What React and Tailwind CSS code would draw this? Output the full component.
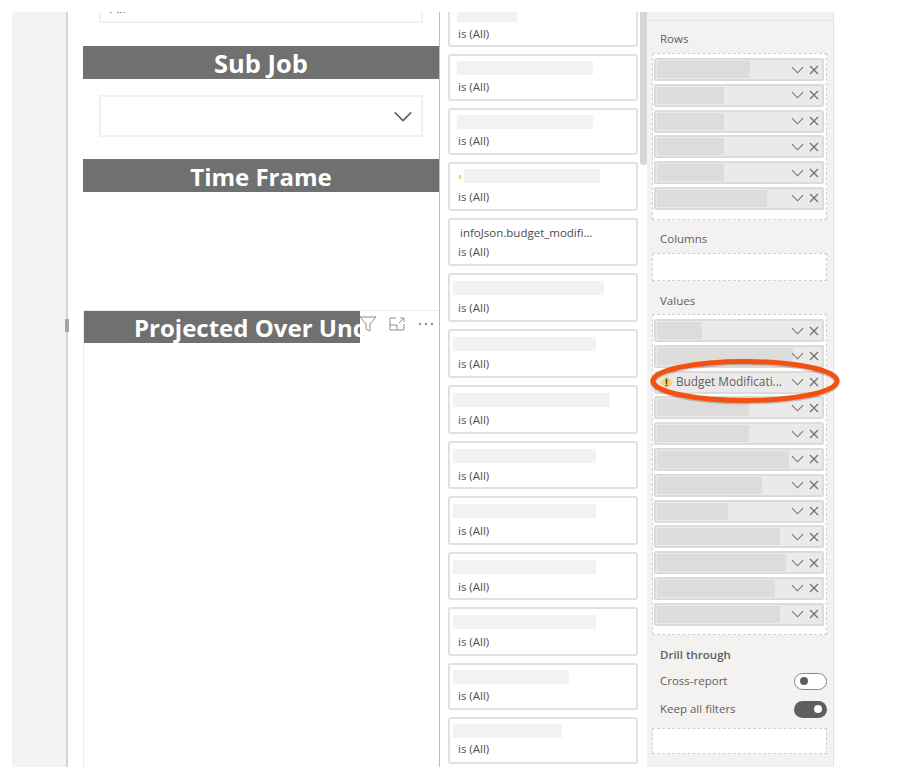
import React from 'react';

const FONT = "font-['Open_Sans','Liberation_Sans',sans-serif]";

// top of the first card is cut off by the page edge
const filterCards = [
  { bar: 60, left: 'ml-[7px]', h: 'h-[46px]', mt: '-mt-[11px]' },
  { bar: 136, left: 'ml-[7px]', h: 'h-[47px]' },
  { bar: 136, left: 'ml-[7px]', h: 'h-[47px]' },
  { bar: 136, left: 'ml-[14px]', h: 'h-[49px]', gap: 'mt-[6px]', dot: true },
  { text: 'infoJson.budget_modifi...', h: 'h-[48px]', gap: 'mt-[3px]' },
  { bar: 151, left: 'ml-[3px]', h: 'h-[49px]', pt: 'pt-[6px]', gap: 'mt-[5px]' },
  { bar: 143, left: 'ml-[3px]', h: 'h-[49px]', pt: 'pt-[6px]', gap: 'mt-[5px]' },
  { bar: 157, left: 'ml-[3px]', h: 'h-[49px]', pt: 'pt-[6px]', gap: 'mt-[5px]' },
  { bar: 143, left: 'ml-[3px]', h: 'h-[48px]', pt: 'pt-[6px]', gap: 'mt-[5px]' },
  { bar: 143, left: 'ml-[3px]', h: 'h-[49px]', pt: 'pt-[6px]', gap: 'mt-[5px]' },
  { bar: 143, left: 'ml-[3px]', h: 'h-[48px]', pt: 'pt-[6px]', gap: 'mt-[5px]' },
  { bar: 143, left: 'ml-[3px]', h: 'h-[49px]', pt: 'pt-[6px]', gap: 'mt-[5px]' },
  { bar: 116, left: 'ml-[3px]', h: 'h-[47px]', pt: 'pt-[5px]', gap: 'mt-[4px]' },
  { bar: 109, left: 'ml-[3px]', h: 'h-[47px]', pt: 'pt-[5px]', gap: 'mt-[3px]' },
];

const rowFields = [93, 67, 67, 67, 67, 110];
const valueFields = [45, 136, 'warn', 92, 92, 132, 105, 71, 123, 129, 118, 123];

function Chevron({ className }) {
  return (
    <svg viewBox="0 0 14 8" className={className} fill="none" stroke="currentColor" strokeWidth="1.1">
      <polyline points="1,1 7,7 13,1" />
    </svg>
  );
}

function FieldRow({ width }) {
  return (
    <div className="h-[23px] mb-[2.8px] flex items-center bg-[#ebeae9] border-2 border-[#dcdbda] rounded-[2px] pl-[1px] relative">
      {width === 'warn' ? (
        <>
          <svg viewBox="0 0 12 12" className="w-[13px] h-[13px] ml-[3px] shrink-0">
            <polygon points="6,0 12,6 6,12 0,6" fill="#f5cf7a" />
            <rect x="5.3" y="2.6" width="1.4" height="4.6" fill="#3b3a39" />
            <rect x="5.3" y="8" width="1.4" height="1.4" fill="#3b3a39" />
          </svg>
          <span className="ml-[3px] text-[11.8px] text-[#605e5c] whitespace-nowrap">Budget Modificati...</span>
        </>
      ) : (
        <div className="h-[17px] bg-[#dedcdb]" style={{ width }} />
      )}
      <div className="absolute right-0 top-0 h-full flex items-center text-[#716f72]">
        <Chevron className="w-[13px] h-[8px]" />
        <svg viewBox="0 0 10 10" className="w-[10px] h-[10px] ml-[5px] mr-[3px]" fill="none" stroke="currentColor" strokeWidth="1.2">
          <path d="M1 1 L9 9 M9 1 L1 9" />
        </svg>
      </div>
    </div>
  );
}

function SectionHeader({ children, size }) {
  return (
    <div className={`h-[33px] bg-[#707070] text-white font-bold text-center ${size}`}>
      {children}
    </div>
  );
}

export default function App() {
  return (
    <div className={`w-[917px] h-[779px] bg-white pt-3 pb-3 pl-3 overflow-hidden ${FONT}`}>
      <div className="h-[755px] flex relative overflow-hidden w-[822px]">
        {/* left gutter */}
        <div className="w-[56px] shrink-0 bg-[#f3f3f3] border-r-2 border-[#d4d4d4]" />

        {/* report canvas */}
        <div className="w-[372px] shrink-0 bg-white border-r border-[#bdbdbd] pl-[15px] overflow-hidden">
          <div className="mx-[16px] h-[40px] -mt-[29px] border-2 border-[#f1f1f1] pl-[9px] pt-[13px] text-[14px] leading-[20px] text-[#605e5c]">
            All
          </div>
          <div className="mt-[23px]">
            <SectionHeader size="text-[25.5px] leading-[34px]">Sub Job</SectionHeader>
          </div>
          <div className="mx-[16px] mt-[16px] h-[42px] border-2 border-[#f1f1f1] flex items-center justify-end pr-[8px] text-[#605e5c]">
            <Chevron className="w-[20px] h-[11px]" />
          </div>
          <div className="mt-[22px]">
            <SectionHeader size="text-[24px] leading-[36px]">Time Frame</SectionHeader>
          </div>
          <div className="mt-[118px] h-[460px] border-t border-l border-[#ececec]">
            <div className="w-[276px] h-[32px] bg-[#707070] text-white text-[24px] font-bold leading-[34px] pl-[50px] whitespace-nowrap overflow-hidden">
              Projected Over Under
            </div>
          </div>
        </div>

        {/* filters pane */}
        <div className="w-[207px] shrink-0 bg-white pl-[8px] pr-[8px] relative overflow-hidden">
          {filterCards.map((card, i) => (
            <div key={i} className={`${card.h} ${card.mt || 'mt-[7px]'} ${card.pt || 'pt-[5px]'} w-[190px] border-2 border-[#e1e1e1] rounded-[3px] relative`}>
              {card.text ? (
                <div className="h-[16px] ml-[10px] text-[11.5px] leading-[16px] text-[#4a4a4a] whitespace-nowrap">{card.text}</div>
              ) : (
                <div className={`h-[14px] bg-[#f3f2f1] ${card.left}`} style={{ width: card.bar }} />
              )}
              {card.dot && <div className="absolute left-[9px] top-[11px] w-[2px] h-[4px] bg-[#f2c67f]" />}
              <div className={`ml-[8px] ${card.gap || 'mt-[4px]'} text-[11.5px] leading-[16px] text-[#4f4f4f]`}>is (All)</div>
            </div>
          ))}
          <div className="absolute top-0 right-[0px] w-[7px] h-[153px] bg-[#d6d6d6] rounded-b-[3px]" />
        </div>

        {/* visualizations pane */}
        <div className="w-[187px] shrink-0 bg-[#f3f2f1] border-r border-[#e3e3e3] pl-[5px] pr-[6px] text-[#605e5c]">
          <div className="-ml-[5px] -mr-[6px] h-[9px] border-b border-[#e6e6e6]" />
          <div className="mt-[10px] ml-[8px] text-[11.5px] leading-[16px]">Rows</div>
          <div className="mt-[6px] h-[167px] border border-dashed border-[#d2d0ce] bg-white pl-[1px] pr-[2px] pt-[4px]">
            {rowFields.map((w, i) => <FieldRow key={i} width={w} />)}
          </div>
          <div className="mt-[11px] ml-[8px] text-[11.5px] leading-[16px]">Columns</div>
          <div className="mt-[6px] h-[28px] border border-dashed border-[#d2d0ce] bg-white" />
          <div className="mt-[12px] ml-[8px] text-[11.5px] leading-[16px]">Values</div>
          <div className="mt-[5px] h-[321px] border border-dashed border-[#d2d0ce] bg-white pl-[1px] pr-[2px] pt-[4px]">
            {valueFields.map((w, i) => <FieldRow key={i} width={w} />)}
          </div>
          <div className="mt-[12px] ml-[8px] text-[11.5px] leading-[16px] font-semibold">Drill through</div>
          <div className="mt-[9px] flex items-center justify-between h-[18px]">
            <span className="ml-[8px] text-[11.5px]">Cross-report</span>
            <div className="w-[33px] h-[17px] rounded-full border border-[#8a8886] bg-white flex items-center pl-[5px]">
              <div className="w-[8px] h-[8px] rounded-full bg-[#605e5c]" />
            </div>
          </div>
          <div className="mt-[10px] flex items-center justify-between h-[18px]">
            <span className="ml-[8px] text-[11.5px]">Keep all filters</span>
            <div className="w-[33px] h-[17px] rounded-full bg-[#605e5c] flex items-center justify-end pr-[5px]">
              <div className="w-[8px] h-[8px] rounded-full bg-white" />
            </div>
          </div>
          <div className="mt-[10px] h-[26px] border border-dashed border-[#d2d0ce] bg-white" />
        </div>

        {/* hover icons on the visual */}
        <div className="absolute left-[347px] top-[304px] flex items-center text-[#8f8f8f]">
          <svg viewBox="0 0 18 16" className="w-[18px] h-[16px]" fill="none" stroke="currentColor" strokeWidth="1">
            <path d="M1 1 H17 L11 8 V15 L7 13 V8 Z" />
          </svg>
          <svg viewBox="0 0 16 14" className="w-[16px] h-[14px] ml-[12px]" fill="none" stroke="currentColor" strokeWidth="1">
            <path d="M7 1 H1 V13 H15 V7 M1 8 H8 V13 M10 6 L15 1 M11 1 H15 V5" />
          </svg>
          <svg viewBox="0 0 16 4" className="w-[16px] h-[4px] ml-[13px]" fill="currentColor">
            <circle cx="2" cy="2" r="1.2" /><circle cx="8" cy="2" r="1.2" /><circle cx="14" cy="2" r="1.2" />
          </svg>
        </div>

        {/* resize handle */}
        <div className="absolute left-[53px] top-[307px] w-[4px] h-[13px] bg-[#a6a6a6]" />
      </div>

      {/* callout ellipse drawn over the screenshot */}
      <svg viewBox="0 0 190 46" className="absolute left-[650px] top-[359px] w-[190px] h-[46px] overflow-visible" fill="none">
        <ellipse cx="95" cy="23" rx="92" ry="19.5" stroke="#000" strokeOpacity="0.18" strokeWidth="6" />
        <ellipse cx="95" cy="22" rx="92" ry="19.5" stroke="#f4500f" strokeWidth="5" />
      </svg>
    </div>
  );
}
